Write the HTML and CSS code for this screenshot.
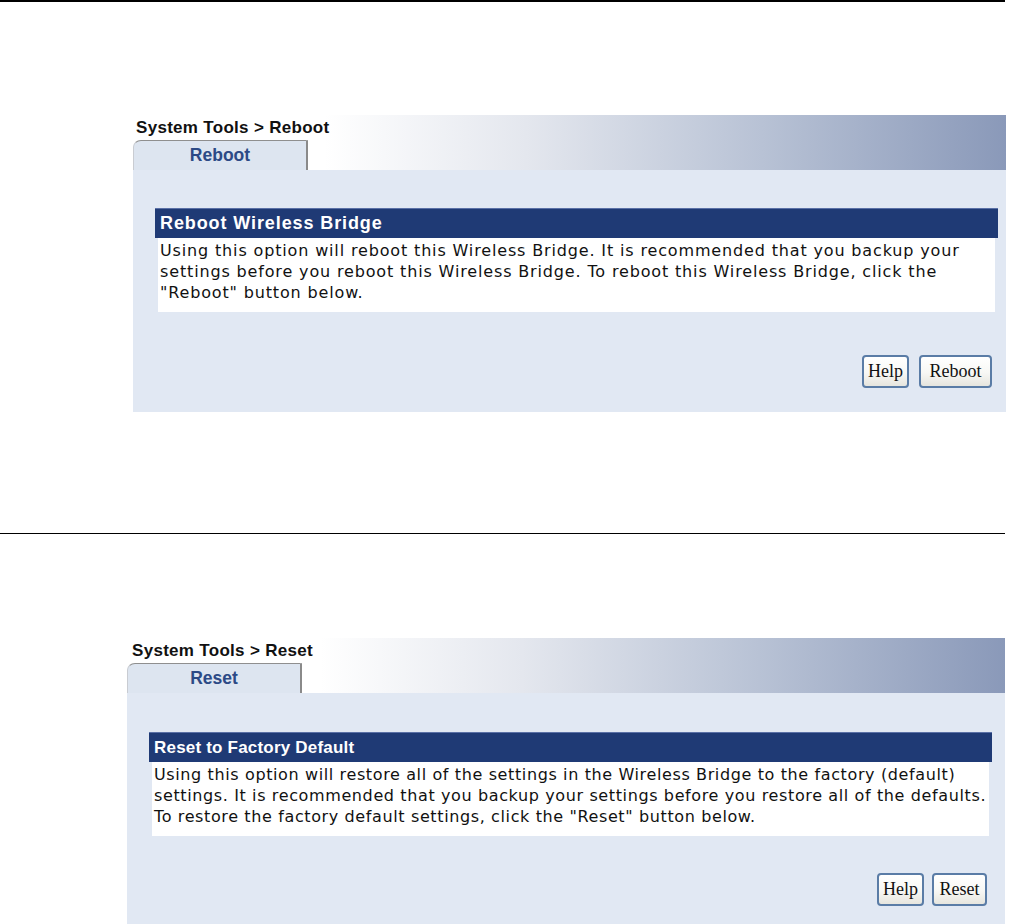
FILE: index.html
```html
<!DOCTYPE html>
<html>
<head>
<meta charset="utf-8">
<title>System Tools</title>
<link rel="stylesheet" href="styles.css">
</head>
<body>
<div class="rule rule-top"></div>

<section class="panel panel-reboot">
  <div class="panel-head">
    <div class="crumb">System Tools &gt; Reboot</div>
    <div class="tab">Reboot</div>
  </div>
  <div class="panel-body">
    <div class="box">
      <div class="box-title">Reboot Wireless Bridge</div>
      <div class="box-text">Using this option will reboot this Wireless Bridge. It is recommended that you backup your<br>settings before you reboot this Wireless Bridge. To reboot this Wireless Bridge, click the<br>"Reboot" button below.</div>
    </div>
    <div class="actions">
      <button class="btn btn-help">Help</button>
      <button class="btn btn-reboot">Reboot</button>
    </div>
  </div>
</section>

<div class="rule rule-mid"></div>

<section class="panel panel-reset">
  <div class="panel-head">
    <div class="crumb">System Tools &gt; Reset</div>
    <div class="tab">Reset</div>
  </div>
  <div class="panel-body">
    <div class="box">
      <div class="box-title">Reset to Factory Default</div>
      <div class="box-text">Using this option will restore all of the settings in the Wireless Bridge to the factory (default)<br>settings. It is recommended that you backup your settings before you restore all of the defaults.<br>To restore the factory default settings, click the "Reset" button below.</div>
    </div>
    <div class="actions">
      <button class="btn btn-help">Help</button>
      <button class="btn btn-reset">Reset</button>
    </div>
  </div>
</section>
</body>
</html>
```

FILE: styles.css
```css
html, body {
  margin: 0;
  padding: 0;
  background: #ffffff;
  font-family: "Liberation Sans", Arial, sans-serif;
}

body {
  width: 1011px;
  height: 924px;
  overflow: hidden;
}

.rule {
  background: #000;
  width: 1005px;
}

.rule-top {
  height: 2px;
}

.rule-mid {
  height: 1px;
  margin-top: 121px;
}

.panel {
  display: flex;
  flex-direction: column;
}

.panel-reboot {
  margin-top: 113px;
  margin-left: 133px;
  width: 873px;
}

.panel-reset {
  margin-top: 104px;
  margin-left: 127px;
  width: 878px;
}

.panel-head {
  height: 55px;
  display: flex;
  flex-direction: column;
  background: linear-gradient(to right, #ffffff 0%, #ffffff 22%, #e4e7ee 45%, #b8c2d5 72%, #8a99b9 100%);
}

.crumb {
  height: 25px;
  line-height: 25px;
  font-size: 17px;
  font-weight: bold;
  color: #111;
  padding-left: 3px;
  letter-spacing: 0.3px;
}

.panel-reset .crumb {
  padding-left: 5px;
}

.tab {
  box-sizing: border-box;
  width: 175px;
  height: 30px;
  line-height: 28px;
  text-align: center;
  font-size: 17.5px;
  font-weight: bold;
  color: #2c4a86;
  background: #dde5f0;
  border-top: 1px solid #8f8f8f;
  border-right: 2px solid #8a8a8a;
  border-left: 1px solid #c9ccd2;
  border-top-left-radius: 8px 7px;
}

.panel-body {
  background: #e1e8f3;
  padding: 38px 8px 24px 22px;
  display: flex;
  flex-direction: column;
}

.panel-reset .panel-body {
  padding-top: 39px;
  padding-left: 22px;
  padding-bottom: 19px;
}

.box {
  width: 843px;
  display: flex;
  flex-direction: column;
}

.box-title {
  box-sizing: border-box;
  height: 30px;
  line-height: 29px;
  background: #1f3a75;
  border-top: 1px solid #5a70a6;
  color: #ffffff;
  font-size: 17px;
  font-weight: bold;
  padding-left: 5px;
  letter-spacing: 0.2px;
}

.panel-reboot .box-title {
  font-size: 18px;
  letter-spacing: 0.9px;
}

.box-text {
  margin: 0 3px;
  background: #ffffff;
  padding: 2px 0 9px 2px;
  font-family: "DejaVu Sans", Verdana, sans-serif;
  font-size: 16px;
  line-height: 21px;
  letter-spacing: 0.62px;
  color: #111;
  white-space: nowrap;
}

.panel-reboot .box-text {
  letter-spacing: 0.85px;
}

.actions {
  display: flex;
  justify-content: flex-end;
  gap: 10px;
  margin-top: 43px;
  padding-right: 6px;
}

.panel-reset .actions {
  margin-top: 37px;
  gap: 8px;
  padding-right: 10px;
}

.btn {
  box-sizing: border-box;
  height: 33px;
  padding: 0;
  font-family: "Liberation Serif", "Times New Roman", serif;
  font-size: 18px;
  color: #111;
  background: linear-gradient(to bottom, #ffffff 0%, #f7f7f4 55%, #e6e5de 100%);
  border: 2px solid #5a7ca6;
  border-radius: 4px;
}

.btn-help {
  width: 47px;
}

.btn-reboot {
  width: 73px;
}

.btn-reset {
  width: 55px;
}
```
